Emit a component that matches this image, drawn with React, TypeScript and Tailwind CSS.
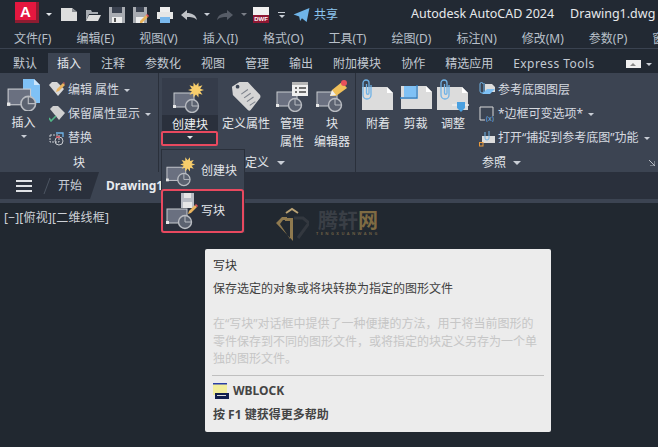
import React from 'react';

const Caret = ({ className = 'border-t-[#c9ced6]' }: { className?: string }) => (
  <span className={`inline-block w-0 h-0 border-x-[3px] border-x-transparent border-t-[3px] ${className}`} />
);

// grey block rectangle with the base point circle, used by most block commands
const BlockShape = () => (
  <g>
    <rect x="1" y="9" width="20" height="14" fill="#6a7080" stroke="#c8cbd0" strokeWidth="1" />
    <circle cx="19" cy="22" r="6.5" fill="#5b6270" stroke="#b9bcc2" strokeWidth="1.4" />
    <path d="M19 16v6h6" stroke="#b9bcc2" strokeWidth="1" fill="none" />
    <rect x="0" y="21" width="3" height="3" fill="#e8e8e8" />
  </g>
);

const Star = ({ cx, cy, r }: { cx: number; cy: number; r: number }) => {
  const pts: string[] = [];
  for (let i = 0; i < 20; i++) {
    const a = (i * Math.PI) / 10;
    const rr = i % 2 === 0 ? r : r * 0.55;
    pts.push(`${cx + rr * Math.cos(a)},${cy + rr * Math.sin(a)}`);
  }
  return <polygon points={pts.join(' ')} fill="#f7cd6b" />;
};

const Clip = ({ x, y }: { x: number; y: number }) => (
  <path
    d={`M${x + 8} ${y + 5}v10a4 4 0 0 1-8 0V4a3 3 0 0 1 6 0v10a1 1 0 0 1-2.5 0V5`}
    fill="none"
    stroke="#6fb2e6"
    strokeWidth="1.3"
  />
);

const InsertIcon = () => (
  <svg width="34" height="36" viewBox="0 0 34 36">
    <path d="M16 4h11l6 6v18H16z" fill="#7fc1f5" />
    <path d="M27 4l6 6h-6z" fill="#cfe6fa" />
    <g transform="translate(0 4) scale(1.12)">
      <BlockShape />
    </g>
  </svg>
);

const CreateIcon = ({ size = 34 }: { size?: number }) => (
  <svg width={size} height={(size * 33) / 34} viewBox="0 0 34 33">
    <g transform="translate(0 4)">
      <BlockShape />
    </g>
    <Star cx={23} cy={10} r={8} />
  </svg>
);

const WblockIcon = () => (
  <svg width="32" height="38" viewBox="0 0 32 38">
    <g transform="translate(0 8)">
      <BlockShape />
    </g>
    <path d="M15 1h13v15H15z" fill="#b8bcc4" />
    <rect x="18" y="1" width="7" height="5" fill="#e6e6e6" />
    <rect x="17" y="10" width="9" height="6" fill="#e6e6e6" />
    <path d="M23 19l6-6 2 2-6 6-3 1z" fill="#e9b35e" />
    <path d="M29 13l1-1 2 2-1 1z" fill="#e8505b" />
  </svg>
);

const TagIcon = () => (
  <svg width="30" height="30" viewBox="0 0 32 32">
    <path d="M1 6l8-5 9 0 13 14a3 3 0 0 1 0 3L21 31a2 2 0 0 1-3 0L2 15z" fill="#d5d5d5" />
    <circle cx="7" cy="6" r="2" fill="#3b4453" />
    <path d="M11 14l7-5M14 18l7-5M17 22l7-5M20 26l6-4" stroke="#7d828b" strokeWidth="1.2" />
  </svg>
);

const ManageIcon = () => (
  <svg width="32" height="32" viewBox="0 0 32 32">
    <g transform="translate(0 3)">
      <BlockShape />
    </g>
    <rect x="16" y="2" width="16" height="14" fill="#efefef" />
    <rect x="16" y="2" width="16" height="3" fill="#b6b6b6" />
    <path d="M19 8h2M23 8h7M19 12h2M23 12h7" stroke="#444" strokeWidth="1.3" />
  </svg>
);

const EditorIcon = () => (
  <svg width="32" height="32" viewBox="0 0 32 32">
    <g transform="translate(0 3)">
      <BlockShape />
    </g>
    <path d="M14 16l2-6 10-8 5 6-11 8z" fill="#f0c05a" />
    <path d="M14 16l2-6 4 5z" fill="#eee" />
    <circle cx="28" cy="3" r="3" fill="#e8505b" />
  </svg>
);

const DocIcon = ({ children }: { children?: React.ReactNode }) => (
  <svg width="34" height="34" viewBox="0 0 34 34">
    <path d="M1 8h25l6 6v17H1z" fill="#dcdcdc" />
    <path d="M26 8l6 6h-6z" fill="#fff" />
    {children}
  </svg>
);

const SmallRow = ({ icon, label, caret }: { icon: React.ReactNode; label: string; caret?: boolean }) => (
  <div className="flex items-center h-[24px]">
    <span className="w-[20px] flex justify-center">{icon}</span>
    <span className="ml-[1px] text-[#d6dae0]">{label}</span>
    {caret && <span className="ml-[5px] flex"><Caret /></span>}
  </div>
);

const BigButton = ({ icon, lines, width }: { icon: React.ReactNode; lines: string[]; width: string }) => (
  <div className={`flex flex-col items-center shrink-0 ${width}`}>
    <div className="h-[36px] flex items-center">{icon}</div>
    <div className="leading-[18px] text-[#e3e6ea] text-center whitespace-nowrap mt-[1px]">
      {lines.map(l => (
        <div key={l}>{l}</div>
      ))}
    </div>
  </div>
);

const menus = ['文件(F)', '编辑(E)', '视图(V)', '插入(I)', '格式(O)', '工具(T)', '绘图(D)', '标注(N)', '修改(M)', '参数(P)', '窗口(W)'];
const tabs = ['默认', '插入', '注释', '参数化', '视图', '管理', '输出', '附加模块', '协作', '精选应用'];

export default function App() {
  return (
    <div className="relative w-[658px] h-[447px] overflow-hidden flex flex-col bg-[#212830] text-[12px] text-[#d6dae0] font-['Noto_Sans','Noto_Sans_CJK_SC',sans-serif]">
      {/* quick access + title */}
      <div className="h-[27px] flex items-center pt-[2px] bg-[#222933] whitespace-nowrap shrink-0">
        <div className="ml-[15px] -mt-[4px] w-[24px] h-[21px] bg-[#e5173f] border-r-[3px] border-b-[3px] border-[#8e1c31] text-white text-[15px] font-bold flex items-center justify-center leading-none font-['Liberation_Sans',sans-serif]">A</div>
        <span className="ml-[7px] flex"><Caret className="border-t-[#e3e6ea]" /></span>
        <div className="ml-[9px] flex items-center gap-[8px]">
          <svg width="16" height="13" viewBox="0 0 16 13"><path d="M0 0h11l5 4v9H0z" fill="#dedede" /><path d="M11 0l5 4h-5z" fill="#8a8d92" /></svg>
          <svg width="16" height="13" viewBox="0 0 16 13"><path d="M1 13V2h5l1 2h6v2H4z" fill="#a8acb2" /><path d="M1 13l3-6h12l-3 6z" fill="#dedede" /></svg>
          <svg width="16" height="16" viewBox="0 0 16 16"><path d="M0 0h16v16H0z" fill="#a9acb2" /><rect x="3" y="0" width="10" height="6" fill="#3b4250" /><rect x="3" y="10" width="10" height="6" fill="#eee" /><rect x="5" y="11" width="2" height="4" fill="#555" /></svg>
          <svg width="16" height="16" viewBox="0 0 16 16"><path d="M0 0h14v16H0z" fill="#a9acb2" /><rect x="3" y="0" width="8" height="5" fill="#3b4250" /><rect x="3" y="10" width="8" height="6" fill="#eee" /><path d="M7 14l6-6 2 2-6 6H7z" fill="#eab45c" /><path d="M13 8l1-1 2 2-1 1z" fill="#e8505b" /></svg>
          <svg width="16" height="16" viewBox="0 0 16 16"><rect x="3" y="0" width="10" height="5" fill="#eee" /><rect x="0" y="5" width="16" height="7" fill="#e6e6e6" /><rect x="3" y="10" width="10" height="6" fill="#7ab8ec" /></svg>
        </div>
        <svg className="ml-[8px]" width="16" height="10" viewBox="0 0 16 10"><path d="M6 0L0 5l6 5V7c4 0 7 0 10 3-1-5-5-7-10-7z" fill="#bfc2c7" /></svg>
        <span className="ml-[7px] flex"><Caret /></span>
        <svg className="ml-[7px]" width="16" height="10" viewBox="0 0 16 10"><path d="M10 0l6 5-6 5V7C6 7 3 7 0 10c1-5 5-7 10-7z" fill="#565c67" /></svg>
        <span className="ml-[8px] flex"><Caret className="border-t-[#7a7f88]" /></span>
        <div className="ml-[6px] w-[16px] h-[16px] bg-[#f1f1f1] flex items-end justify-center">
          <span className="w-full bg-[#8f1733] text-white text-[6px] leading-[8px] font-bold text-center font-['Liberation_Sans',sans-serif]">DWF</span>
        </div>
        <span className="ml-[9px] flex flex-col items-center gap-[2px]">
          <span className="w-[7px] h-[1px] bg-[#c9ced6]" />
          <Caret />
        </span>
        <svg className="ml-[8px]" width="17" height="14" viewBox="0 0 17 15"><path d="M0 7L17 0l-3 15-5-4-2 3-1-5z" fill="#6fb4e8" /></svg>
        <span className="ml-[4px] text-[#8cc4ee]">共享</span>
        <span className="ml-[73px] text-[12.5px] text-[#e6e8eb]">Autodesk AutoCAD 2024</span>
        <span className="ml-[16px] text-[12.5px] text-[#e6e8eb]">Drawing1.dwg</span>
      </div>

      {/* menu bar */}
      <div className="h-[22px] flex items-center pt-[2px] bg-[#222933] border-b border-[#3a4250] pl-[14px] gap-[25px] whitespace-nowrap shrink-0 text-[#b9c0ca]">
        {menus.map(m => (
          <span key={m}>{m}</span>
        ))}
      </div>

      {/* ribbon tabs */}
      <div className="h-[24px] flex items-end bg-[#222933] pl-[3px] whitespace-nowrap shrink-0">
        {tabs.map(t => (
          <span
            key={t}
            className={
              t === '插入'
                ? 'h-[20px] px-[9px] mx-[1px] pt-[1px] bg-[#3c4452] text-[#e6e9ed] flex items-center'
                : 'h-[20px] px-[10px] pt-[1px] flex items-center text-[#c3c9d2]'
            }
          >
            {t}
          </span>
        ))}
        <span className="h-[20px] px-[10px] pt-[1px] flex items-center text-[#c3c9d2] tracking-[0.45px]">Express Tools</span>
        <span className="ml-[21px] mb-[5px] w-[15px] h-[8px] bg-[#f0f0f0] flex items-center justify-center">
          <span className="w-0 h-0 border-x-[3px] border-x-transparent border-b-[3px] border-b-[#888]" />
        </span>
        <span className="ml-[5px] mb-[7px] flex"><Caret /></span>
      </div>

      {/* ribbon */}
      <div className="h-[99px] flex bg-[#3c4452] shrink-0 text-[#d6dae0]">
        <div className="w-[159px] flex flex-col border-r border-[#2a303b] shrink-0">
          <div className="flex h-[81px] pt-[2px]">
            <div className="w-[47px] flex flex-col items-center">
              <div className="h-[36px] flex items-center"><InsertIcon /></div>
              <span className="text-[#e3e6ea] leading-[18px] mt-[3px]">插入</span>
              <span className="flex mt-[3px]"><Caret /></span>
            </div>
            <div className="pt-[3px]">
              <SmallRow
                label="编辑 属性"
                caret
                icon={<svg width="16" height="16" viewBox="0 0 16 16"><path d="M0 3l3-3h5l7 7-6 7z" fill="#d8d8d8" /><path d="M8 7l6-6 2 2-6 6-3 1z" fill="#e9b35e" /><path d="M14 1l1-1 1 2z" fill="#e8505b" /></svg>}
              />
              <SmallRow
                label="保留属性显示"
                caret
                icon={<svg width="16" height="16" viewBox="0 0 16 16"><path d="M1 3l3-3h5l7 7-6 7z" fill="#d0d0d0" /><path d="M0 12l2 3 5-5" fill="none" stroke="#52b788" strokeWidth="1.6" /></svg>}
              />
              <SmallRow
                label="替换"
                icon={<svg width="16" height="16" viewBox="0 0 16 16"><rect x="1" y="5" width="9" height="7" fill="none" stroke="#c8cbd0" strokeDasharray="2 1" /><circle cx="10" cy="11" r="4" fill="none" stroke="#c8cbd0" /><path d="M7 3h7v4" fill="none" stroke="#6fb4e8" strokeWidth="1.3" /><path d="M7 7h4" stroke="#e8505b" strokeWidth="1.3" /></svg>}
              />
            </div>
          </div>
          <div className="h-[18px] text-center leading-[18px] text-[#e3e6ea]">块</div>
        </div>

        <div className="w-[197px] flex flex-col border-r border-[#2a303b] shrink-0">
          <div className="flex h-[81px] pt-[5px] pl-[3px]">
            <div className="w-[56px] h-[67px] bg-[#2a303c] flex flex-col items-center shrink-0">
              <div className="w-full h-[37px] bg-[#353c4a] flex items-center justify-center"><CreateIcon /></div>
              <span className="text-[#eef0f2] leading-[18px] mt-[1px]">创建块</span>
              <span className="flex mt-[2px]"><Caret className="border-t-[#e3e6ea]" /></span>
            </div>
            <BigButton width="w-[52px] ml-[2px]" icon={<TagIcon />} lines={['定义属性']} />
            <BigButton width="w-[36px] ml-[2px]" icon={<ManageIcon />} lines={['管理', '属性']} />
            <BigButton width="w-[42px] ml-[1px]" icon={<EditorIcon />} lines={['块', '编辑器']} />
          </div>
          <div className="h-[18px] flex items-center pl-[86px] text-[#e3e6ea]">
            定义<span className="ml-[8px] flex"><Caret className="border-t-[#c9ced6] border-x-[4px] border-t-[4px]" /></span>
          </div>
        </div>

        <div className="flex-1 flex flex-col min-w-0">
          <div className="flex h-[81px] pt-[5px]">
            <BigButton width="w-[42px] ml-[1px]" icon={<DocIcon><Clip x={2} y={1} /></DocIcon>} lines={['附着']} />
            <BigButton
              width="w-[33px]"
              icon={
                <svg width="34" height="34" viewBox="0 0 34 34">
                  <path d="M2 7h25l6 6v17H2z" fill="#dcdcdc" />
                  <path d="M27 7l6 6h-6z" fill="#fff" />
                  <rect x="5" y="7" width="12" height="11" fill="#7fc1f5" />
                  <path d="M1 19h17V6" fill="none" stroke="#2d7fc4" strokeWidth="1.4" />
                </svg>
              }
              lines={['剪裁']}
            />
            <BigButton
              width="w-[42px]"
              icon={
                <DocIcon>
                  <Clip x={5} y={1} />
                  <path d="M21 23h8v6l-4 4-4-4z" fill="#4aa0e0" />
                  <path d="M16 26h5M29 26h4" stroke="#eee" strokeWidth="1.4" />
                </DocIcon>
              }
              lines={['调整']}
            />
            <div className="ml-[3px]">
              <SmallRow
                label="参考底图图层"
                icon={<svg width="17" height="16" viewBox="0 0 17 16"><path d="M6 2h7l3 3v5H6z" fill="#dcdcdc" /><path d="M3 12l5-5h8l-5 5z" fill="#7fc1f5" /><path d="M5 1v8a2 2 0 0 1-4 0V2a1.5 1.5 0 0 1 3 0" fill="none" stroke="#6fb4e8" /></svg>}
              />
              <SmallRow
                label="*边框可变选项*"
                caret
                icon={<svg width="16" height="16" viewBox="0 0 16 16"><path d="M1 1h13v9M1 1v13h5" fill="none" stroke="#d8d8d8" /><text x="7" y="15" fontSize="7" fill="#6fb4e8">(x)</text></svg>}
              />
              <SmallRow
                label="打开“捕捉到参考底图”功能"
                caret
                icon={<svg width="17" height="17" viewBox="0 0 17 17"><path d="M3 6h13v7H3z" fill="#dcdcdc" /><rect x="0.5" y="12.5" width="3.5" height="3.5" fill="none" stroke="#e99a3c" /><path d="M10 1v7a2 2 0 0 1-4 0V2" fill="none" stroke="#6fb4e8" /></svg>}
              />
            </div>
          </div>
          <div className="h-[18px] flex items-center pl-[126px] pr-[3px] text-[#e3e6ea]">
            参照<span className="ml-[7px] flex"><Caret className="border-t-[#c9ced6] border-x-[4px] border-t-[4px]" /></span>
            <svg className="ml-auto" width="6" height="6" viewBox="0 0 6 6"><path d="M0 0l6 6M6 1v5H1" fill="none" stroke="#b7bcc4" /></svg>
          </div>
        </div>
      </div>

      {/* file tabs */}
      <div className="h-[27px] flex items-center bg-[#2a303c] shrink-0 whitespace-nowrap">
        <div className="ml-[16px] w-[16px] flex flex-col gap-[3px]">
          <span className="h-[2px] bg-[#e0e2e6]" />
          <span className="h-[2px] bg-[#e0e2e6]" />
          <span className="h-[2px] bg-[#e0e2e6]" />
        </div>
        <svg className="ml-[11px]" width="8" height="16" viewBox="0 0 8 16"><path d="M7 0L1 16" stroke="#4c5462" /></svg>
        <span className="ml-[7px] text-[#c9ced6]">开始</span>
        <div className="ml-[8px] h-full w-[120px] pl-[16px] flex items-center bg-[#3c4452] [clip-path:polygon(9px_0,100%_0,100%_100%,0_100%)]">
          <span className="font-bold text-[#e8ebef]">Drawing1</span>
        </div>
      </div>
      <div className="h-[4px] bg-[#3c4452] shrink-0" />

      {/* drawing area */}
      <div className="flex-1 pl-[4px] pt-[7px] text-[#cdd1d7] leading-[16px] tracking-[0.2px]">[−][俯视][二维线框]</div>

      {/* red highlight on the create block split button */}
      <div className="absolute left-[161px] top-[131px] w-[57px] h-[15px] border-2 border-[#e8495f] rounded-[2px]" />

      {/* watermark */}
      <div className="absolute left-[275px] top-[207px] flex items-start gap-[7px]">
        <svg width="34" height="34" viewBox="0 0 34 34">
          <path d="M1 16l6-6h5v3H8l-3 4 10 15V14h-5v-3h8v23z" fill="#8f7a4f" />
          <path d="M19 11h9l6 5-11 15" fill="none" stroke="#33383f" strokeWidth="3" />
          <path d="M11 6l6-4 6 4" fill="none" stroke="#b9a274" strokeWidth="2" />
        </svg>
        <div className="flex flex-col items-center pt-[4px]">
          <span className="text-[20px] leading-[20px] font-bold text-[#3a3f46]">
            腾轩<span className="text-[#7f6b43]">网</span>
          </span>
          <span className="text-[4px] leading-[6px] tracking-[2.4px] font-bold text-[#6b5f45]">TENGXUANWANG</span>
        </div>
      </div>

      {/* flyout */}
      <div className="absolute left-[161px] top-[149px] w-[84px] h-[84px] bg-[#3c4452] border border-[#2a303b] flex flex-col">
        <div className="h-[39px] flex items-center pt-[3px] pl-[4px]">
          <CreateIcon size={32} />
          <span className="ml-[3px] text-[#e3e6ea]">创建块</span>
        </div>
        <div className="flex-1 flex items-center pl-[3px] bg-[#2a303c] border-2 border-[#e8495f] rounded-[3px] -ml-[1px] -mb-[1px]">
          <WblockIcon />
          <span className="ml-[3px] text-[#e3e6ea]">写块</span>
        </div>
      </div>

      {/* tooltip */}
      <div className="absolute left-[205px] top-[249px] w-[346px] h-[183px] bg-[#ececec] rounded-[2px] text-[#404040] px-[8px] pt-[8px] leading-[17px]">
        <div className="text-[#333]">写块</div>
        <div className="mt-[6px]">保存选定的对象或将块转换为指定的图形文件</div>
        <div className="mt-[18px] text-[#c6c6c6] leading-[17.5px]">
          <div>在“写块”对话框中提供了一种便捷的方法，用于将当前图形的</div>
          <div>零件保存到不同的图形文件，或将指定的块定义另存为一个单</div>
          <div>独的图形文件。</div>
        </div>
        <div className="-mx-[1px] mt-[7px] border-t border-[#bfbfbf]" />
        <div className="mt-[7px] flex items-center font-bold text-[#444] h-[16px]">
          <svg width="16" height="16" viewBox="0 0 16 16" className="shrink-0">
            <rect width="14" height="12" fill="#f2ee9c" />
            <rect width="14" height="1.5" fill="#2a3fa8" />
            <rect x="2" y="10" width="14" height="6" fill="#12204d" />
            <rect x="4" y="12" width="9" height="1" fill="#ddd" />
          </svg>
          <span className="ml-[4px]">WBLOCK</span>
        </div>
        <div className="mt-[7px] font-bold text-[#444]">按 F1 键获得更多帮助</div>
      </div>
    </div>
  );
}
